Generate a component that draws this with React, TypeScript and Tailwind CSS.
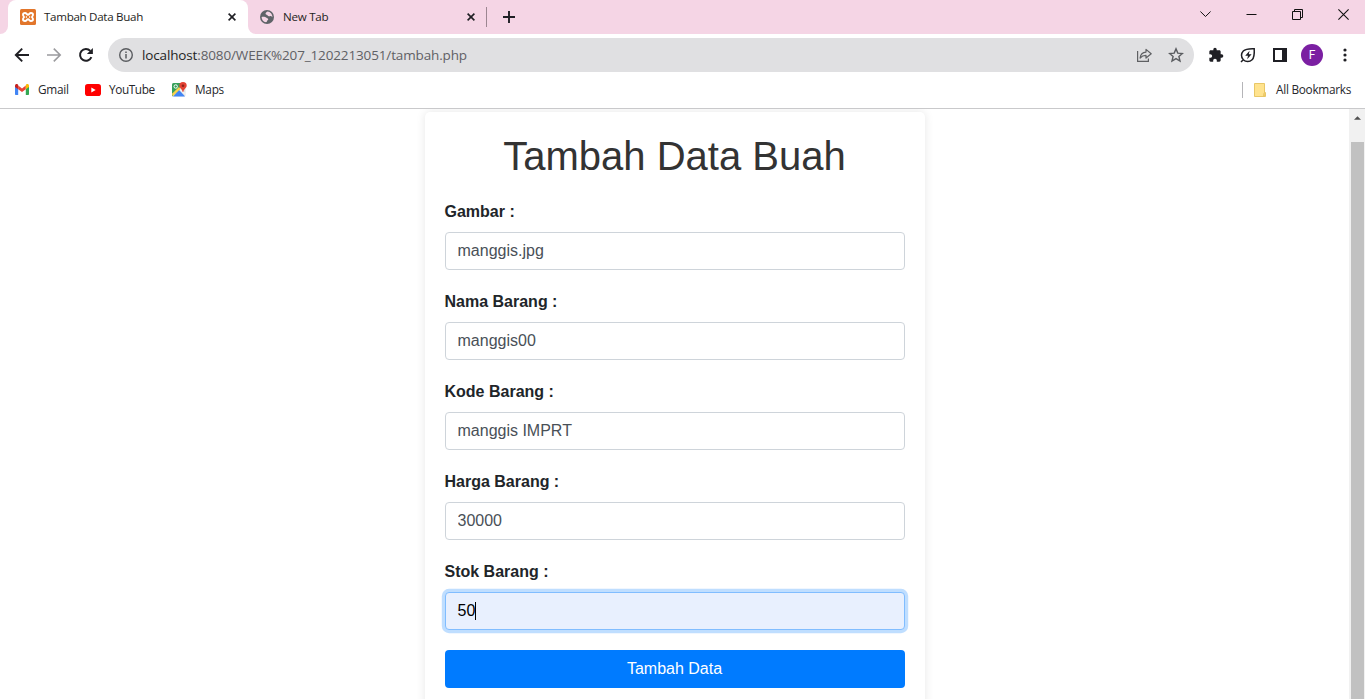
import React from "react";

const UI = "font-['Open_Sans','Noto_Sans',sans-serif]";

function Close({ className }: { className: string }) {
  return (
    <svg className={className} viewBox="0 0 8 8" width="8" height="8" stroke="#1f1f24" strokeWidth="1.6" fill="none">
      <path d="M0.6 0.6L7.4 7.4M7.4 0.6L0.6 7.4" />
    </svg>
  );
}

function XamppIcon() {
  return (
    <svg width="16" height="16" viewBox="0 0 16 16">
      <rect width="16" height="16" rx="1.5" fill="#e2762b" />
      <path
        d="M5 4C3.5 4 3 4.800 3 5.700C3 7 4 7.300 4 8C4 8.700 3 9 3 10.300C3 11.200 3.500 12 5 12C6.700 12 6.600 10.200 8 10.200C9.400 10.200 9.300 12 11 12C12.500 12 13 11.200 13 10.300C13 9 12 8.700 12 8C12 7.300 13 7 13 5.700C13 4.800 12.500 4 11 4C9.300 4 9.400 5.800 8 5.800C6.600 5.800 6.700 4 5 4Z"
        fill="none"
        stroke="#fff"
        strokeWidth="1.9"
      />
      <path d="M6.400 7.300V8.700M9.600 7.300V8.700" stroke="#fff" strokeWidth="1.2" />
    </svg>
  );
}

function GlobeIcon() {
  return (
    <svg width="14" height="14" viewBox="0 0 14 14">
      <circle cx="7" cy="7" r="7" fill="#5f6368" />
      <path d="M7.6 1.6C6.2 2.4 5.3 3 5.6 4C5.9 4.9 7.4 4.6 7.6 5.6C7.8 6.4 9 6.5 9.8 6.2C10.8 5.9 11.6 6.4 12.4 7.2C12.4 4.4 10.5 1.9 7.6 1.6Z" fill="#f5d5e5" />
      <path d="M1.6 7C3 6.6 5.4 6.7 6.2 7.6C6.8 8.4 7.8 8.1 8.2 9C8.5 9.8 7.4 10 7.2 10.8C7 11.6 6.6 12.2 6 12.3C3.3 11.9 1.5 9.6 1.6 7Z" fill="#f5d5e5" />
    </svg>
  );
}

function TabStrip() {
  return (
    <div className="flex h-[34px] bg-[#f5d5e5] text-[12px] text-[#1f1f24]">
      <div className="flex w-2 items-end bg-white">
        <div className="h-[34px] w-2 rounded-br-lg bg-[#f5d5e5]" />
      </div>
      <div className="flex w-60 items-center rounded-t-lg bg-white pl-3">
        <XamppIcon />
        <span className="ml-2 w-[184px] whitespace-nowrap text-[11.6px] tracking-[-0.3px]">Tambah Data Buah</span>
        <Close className="shrink-0" />
      </div>
      <div className="flex w-2 items-end bg-white">
        <div className="h-[34px] w-2 rounded-bl-lg bg-[#f5d5e5]" />
      </div>
      <div className="flex w-[231px] items-center pl-1">
        <GlobeIcon />
        <span className="ml-[9px] w-[184px] whitespace-nowrap text-[11.6px] tracking-[-0.27px]">New Tab</span>
        <Close className="shrink-0" />
      </div>
      <div className="mt-[7px] -ml-px h-5 w-px bg-[#9c8691]" />
      <svg className="mt-[11px] ml-4" width="12" height="12" viewBox="0 0 12 12" stroke="#1f1f24" strokeWidth="1.9">
        <path d="M6 0V12M0 6H12" />
      </svg>
      <div className="ml-auto flex h-[28px] items-center gap-[35px] pr-4">
        <svg width="11" height="6" viewBox="0 0 11 6" fill="none" stroke="#111" strokeWidth="1">
          <path d="M0.4 0.5L5.5 5.5L10.6 0.5" />
        </svg>
        <svg width="11" height="11" viewBox="0 0 11 11" stroke="#111">
          <path d="M0.5 5.5H10.5" />
        </svg>
        <svg width="11" height="11" viewBox="0 0 11 11" fill="none" stroke="#111">
          <path d="M0.5 2.5H8.5V10.5H0.5ZM2.5 2.5V0.5H10.5V8.5H8.5" />
        </svg>
        <svg width="11" height="11" viewBox="0 0 11 11" stroke="#111" strokeWidth="1.1">
          <path d="M0.4 0.4L10.6 10.6M10.6 0.4L0.4 10.6" />
        </svg>
      </div>
    </div>
  );
}

function Toolbar() {
  return (
    <div className="flex h-[42px] items-center pl-[14px]">
      <svg width="16" height="16" viewBox="0 0 16 16" fill="none" stroke="#1f1f24" strokeWidth="1.9">
        <path d="M15 8H2M8.2 1.6L1.8 8L8.2 14.4" />
      </svg>
      <svg className="ml-4" width="16" height="16" viewBox="0 0 16 16" fill="none" stroke="#9b9b9e" strokeWidth="1.6">
        <path d="M1 8H14M7.8 1.6L14.2 8L7.8 14.4" />
      </svg>
      <svg className="ml-4" width="16" height="16" viewBox="0 0 16 16">
        <path d="M13.4 10.2A5.9 5.9 0 1 1 12.3 3.9" fill="none" stroke="#1f1f24" strokeWidth="2" />
        <path d="M14.9 1V7H8.9Z" fill="#1f1f24" />
      </svg>
      <div className="ml-[14px] flex h-[34px] w-[1086px] items-center rounded-full bg-[#e0e0e2] pr-[10px] pl-[11px]">
        <svg width="14" height="14" viewBox="0 0 14 14" fill="none" stroke="#5a5c60" strokeWidth="1.4">
          <circle cx="7" cy="7" r="6.3" />
          <path d="M7 6V10.4M7 3.5V5" strokeWidth="1.5" />
        </svg>
        <span className="ml-[9px] text-[13.5px] leading-5 tracking-[-0.14px] whitespace-nowrap text-[#606165]">
          <span className="text-[#1f1f24]">localhost</span>:8080/WEEK%207_1202213051/tambah.php
        </span>
        <svg className="ml-auto" width="16" height="16" viewBox="0 0 16 16" fill="none" stroke="#5f6063" strokeWidth="1.2">
          <path d="M1.6 4V14.400H12.400V11.500" />
          <path d="M4.100 11C4.500 7.600 6.300 5.300 10 5.100V2.400L15.200 6.800L10 11V8.400C7.300 8.400 5.700 9.100 4.100 11Z" strokeLinejoin="round" />
        </svg>
        <svg className="ml-4" width="16" height="16" viewBox="0 0 16 16" fill="none" stroke="#5a5c60" strokeWidth="1.4">
          <path d="M8 1.9L9.8 6.1L14.4 6.5L10.9 9.5L12 14L8 11.6L4 14L5.1 9.5L1.6 6.5L6.2 6.1Z" />
        </svg>
      </div>
      <svg className="ml-[14px]" width="16" height="16" viewBox="0 0 24 24" fill="#1f1f24">
        <path d="M20.5 11H19V7c0-1.1-.9-2-2-2h-4V3.500a2.500 2.500 0 0 0-5 0V5H4c-1.100 0-1.990.9-1.990 2v3.800H3.500c1.490 0 2.700 1.210 2.700 2.700s-1.210 2.700-2.700 2.700H2V20c0 1.100.9 2 2 2h3.800v-1.500c0-1.490 1.210-2.700 2.700-2.700s2.700 1.210 2.700 2.700V22H17c1.100 0 2-.9 2-2v-4h1.500a2.500 2.500 0 0 0 0-5z" />
      </svg>
      <svg className="ml-4" width="16" height="16" viewBox="0 0 16 16" fill="none" stroke="#1f1f24" strokeWidth="1.5">
        <path d="M3.300 12.700C0.800 10.300 1 6.300 3.300 4C5.700 1.500 9 1.500 14.200 1.700C14.500 6.700 14.500 10.400 12.100 12.700C9.700 15 5.700 15 3.300 12.700ZM3.500 12.500L1 15" />
        <path d="M9.600 3.700L5.200 8.700H8L7.200 12.200L11.600 7.200H8.800Z" fill="#1f1f24" stroke="none" />
      </svg>
      <svg className="ml-[17px]" width="14" height="14" viewBox="0 0 14 14">
        <path d="M1 1H13V13H1Z" fill="none" stroke="#1f1f24" strokeWidth="2" />
        <path d="M9 0H14V14H9Z" fill="#1f1f24" />
      </svg>
      <div className="ml-[14px] flex size-[22px] items-center justify-center rounded-full bg-[#7b1fa2] font-[Roboto,sans-serif] text-[12px] text-white">
        F
      </div>
      <svg className="ml-[19.5px]" width="4" height="14" viewBox="0 0 4 14" fill="#1f1f24">
        <circle cx="2" cy="2" r="1.600" />
        <circle cx="2" cy="7" r="1.600" />
        <circle cx="2" cy="12" r="1.600" />
      </svg>
    </div>
  );
}

function Bookmarks() {
  return (
    <div className="flex h-[33px] items-center border-b border-[#c9c9cb] pr-[14px] pb-[5px] pl-[15px] text-[11.8px] tracking-[-0.27px] text-[#26272b]">
      <svg width="14" height="11" viewBox="0 0 14 11">
        <path d="M0 1.500V10.200Q0 11 .8 11H3.200V4.500Z" fill="#4285f4" />
        <path d="M14 1.500V10.200Q14 11 13.200 11H10.800V4.500Z" fill="#34a853" />
        <path d="M3.200 1.500L7 4.400L10.800 1.500V5.200L7 8.100L3.200 5.200Z" fill="#ea4335" />
        <path d="M0 1.700C0 .2 1.700-.4 2.800.5L3.200.9V5.200L0 2.900Z" fill="#c5221f" />
        <path d="M14 1.700C14 .2 12.300-.4 11.200.5L10.800.9V5.200L14 2.900Z" fill="#fbbc04" />
      </svg>
      <span className="ml-[9px] w-[31px] whitespace-nowrap">Gmail</span>
      <svg className="ml-4" width="16" height="12" viewBox="0 0 16 12">
        <rect width="16" height="12" rx="2.800" fill="#f00" />
        <path d="M6.300 3.400L10.700 6L6.300 8.600Z" fill="#fff" />
      </svg>
      <span className="ml-2 w-[46px] whitespace-nowrap tracking-[-0.4px]">YouTube</span>
      <svg className="ml-[17px]" width="15" height="15" viewBox="0 0 15 15">
        <rect y="1" width="13.500" height="13.500" rx="1.500" fill="#dfe3e6" />
        <path d="M1.500 1H9L7.500 8L0 14.500V2.500Q0 1 1.500 1Z" fill="#35a05a" />
        <path d="M1 14.500L7.200 8L13 14.500Z" fill="#4285f4" />
        <path d="M7.200 8L9 6.500L13.500 11.200V13.500Z" fill="#f1f1f1" />
        <path d="M0 11.800L7 5L8.500 6.700L.8 14.300Z" fill="#fbd04b" />
        <circle cx="3.700" cy="4.500" r="1.700" fill="none" stroke="#fff" strokeWidth="1" />
        <path d="M11 .1A3.700 3.700 0 0 1 14.700 3.800C14.700 6 11.800 6.800 11.300 10H10.700C10.200 6.800 7.300 6 7.300 3.800A3.700 3.700 0 0 1 11 .1Z" fill="#e34334" />
        <circle cx="11" cy="3.800" r="1.300" fill="#8c231c" />
      </svg>
      <span className="ml-2">Maps</span>
      <div className="ml-auto h-4 w-px bg-[#b5b5b8]" />
      <svg className="ml-[11px]" width="12" height="14" viewBox="0 0 12 14">
        <path d="M.5.5H10.500V9.500H11.500V13.500H.5Z" fill="#ffe38e" stroke="#e8c767" />
        <path d="M9.500 13V10.500L10.500 9.500V13Z" fill="#fff0b8" stroke="#e8c055" strokeWidth=".7" />
      </svg>
      <span className="ml-[10px] w-[75px] whitespace-nowrap">All Bookmarks</span>
    </div>
  );
}

const fields = [
  { label: "Gambar :", value: "manggis.jpg" },
  { label: "Nama Barang :", value: "manggis00" },
  { label: "Kode Barang :", value: "manggis IMPRT" },
  { label: "Harga Barang :", value: "30000" },
];

function Form() {
  return (
    <main className="flex min-w-0 flex-1 justify-center overflow-hidden bg-white pt-[3px] font-['Liberation_Sans',Arial,sans-serif] text-base text-[#212529]">
      <div className="h-[640px] w-[500px] rounded-[5px] bg-white p-5 shadow-[0_0_10px_rgba(0,0,0,0.1)]">
        <h1 className="mb-5 text-center text-[40px] leading-[48px] text-[#333]">Tambah Data Buah</h1>
        {fields.map((f) => (
          <div key={f.label} className="mb-5">
            <label className="mb-2 block leading-6 font-bold">{f.label}</label>
            <input
              defaultValue={f.value}
              className="block h-[38px] w-full rounded border border-[#ced4da] bg-white px-3 text-[#495057] outline-none"
            />
          </div>
        ))}
        <div className="mb-5">
          <label className="mb-2 block leading-6 font-bold">Stok Barang :</label>
          <div className="flex h-[38px] items-center rounded border border-[#80bdff] bg-[#e8f0fe] px-3 text-black shadow-[0_0_0_3.2px_rgba(0,123,255,0.25)]">
            50
            <span className="h-[18px] w-px bg-black" />
          </div>
        </div>
        <button className="block h-[38px] w-full rounded bg-[#007bff] text-white">Tambah Data</button>
      </div>
    </main>
  );
}

export default function App() {
  return (
    <div className={`flex h-[699px] w-[1365px] flex-col overflow-hidden bg-white ${UI}`}>
      <TabStrip />
      <Toolbar />
      <Bookmarks />
      <div className="flex min-h-0 flex-1">
        <Form />
        <div className="flex w-4 flex-col items-center bg-[#f1f1f1] pt-[7px]">
          <svg className="ml-px" width="7" height="4" viewBox="0 0 8 4" fill="#505050">
            <path d="M0 4L4 0L8 4Z" />
          </svg>
          <div className="mt-[22px] ml-px w-[13px] flex-1 bg-[#c1c1c1]" />
        </div>
      </div>
    </div>
  );
}
